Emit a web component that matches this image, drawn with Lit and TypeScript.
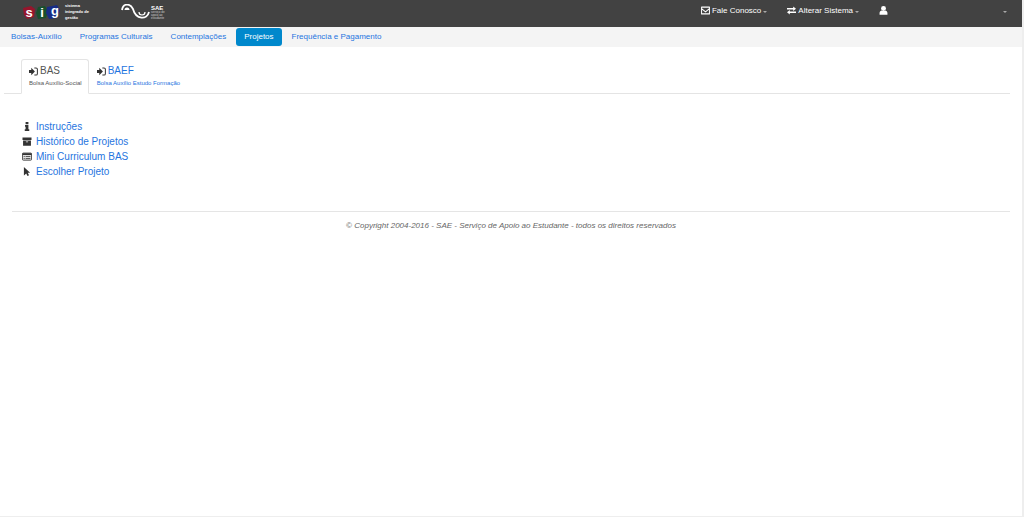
import { LitElement, html, css, svg } from "lit";
import { customElement, property, state } from "lit/decorators.js";
import { classMap } from "lit/directives/class-map.js";

const icons: Record<string, { box: string; shape: unknown }> = {
  mail: {
    box: "0 0 16 16",
    shape: svg`<path d="M1 2h14v12H1z M1 4.500l7 6L15 4.500" fill="none" stroke="currentColor" stroke-width="1.8" stroke-linejoin="round"/>`,
  },
  exchange: {
    box: "0 0 16 16",
    shape: svg`<path d="M0 3.500h11V.8L16 4.800l-5 4V6.400H0z M16 9.600H5V7.200L0 11.200l5 4v-2.700h11z"/>`,
  },
  user: {
    box: "0 0 16 16",
    shape: svg`<circle cx="8" cy="4.600" r="4.400"/><path d="M1 15.500v-3C1 9.600 3 8 5 7.800c2 1.500 4 1.500 6 0 2 .2 4 1.800 4 4.700v3z"/>`,
  },
  enter: {
    box: "0 0 16 16",
    shape: svg`<path d="M0 5.500h4V1.500L10.500 8 4 14.500v-4H0z"/><path d="M9.500 1.800h3a2.400 2.400 0 0 1 2.400 2.400v7.600a2.400 2.400 0 0 1-2.400 2.400h-3" fill="none" stroke="currentColor" stroke-width="1.800"/>`,
  },
  info: {
    box: "0 0 16 16",
    shape: svg`<path d="M5.500 0h5v4h-5z M4.500 5.500h6V13H12v3H4v-3h1.500V8.500h-1z"/>`,
  },
  archive: {
    box: "0 0 16 16",
    shape: svg`<path fill-rule="evenodd" d="M0 1h16v4.500H0z M1 6.200h14V15.500H1z M6 7.800v1.500h4V7.800z"/>`,
  },
  card: {
    box: "0 0 18 16",
    shape: svg`<rect x=".8" y="1.800" width="16.400" height="12.800" rx="1.500" fill="#ddd" stroke="currentColor" stroke-width="1.500"/><path d="M1 2h16V5.500H1z M3 7.200h2v1.400H3z M6.500 7.200h8.500v1.400H6.500z M3 10.500h2v1.400H3z M6.500 10.500h8.500v1.400H6.500z"/>`,
  },
  pointer: {
    box: "0 0 16 16",
    shape: svg`<path d="M2.500 0l11 10.300H9.300l2.300 4.500-2.700 1.200L6.600 11.500 2.500 15z"/>`,
  },
};

@customElement("ui-icon")
class UiIcon extends LitElement {
  @property() name = "info";

  static styles = css`
    :host {
      display: inline-flex;
      flex: none;
    }
    .glyph {
      width: 100%;
      height: 100%;
      fill: currentColor;
    }
  `;

  render() {
    const icon = icons[this.name];
    return html`<svg class="glyph" viewBox=${icon.box} aria-hidden="true">${icon.shape}</svg>`;
  }
}

@customElement("top-bar")
class TopBar extends LitElement {
  static styles = css`
    :host {
      display: block;
      background: #424242;
      color: #fff;
    }
    .bar {
      display: flex;
      align-items: flex-start;
      height: 27px;
      padding: 0 15px 0 23px;
    }
    .brand {
      display: flex;
      align-items: center;
      gap: 5px;
      height: 24px;
      color: #fff;
      text-decoration: none;
    }
    .brand + .brand {
      margin-left: 26px;
      gap: 1px;
    }
    .sig {
      width: 37px;
      height: 16px;
    }
    .wave {
      width: 29px;
      height: 16px;
    }
    .caption {
      font-size: 4px;
      line-height: 6px;
      font-weight: bold;
      width: 30px;
      white-space: nowrap;
    }
    .unit {
      display: flex;
      flex-direction: column;
      width: 16px;
      font-size: 3px;
      line-height: 3px;
      white-space: nowrap;
      color: #ccc;
    }
    .unit strong {
      font-size: 6px;
      line-height: 6px;
      color: #fff;
    }
    .menus {
      display: flex;
      margin-left: auto;
      gap: 20px;
    }
    .menu {
      display: flex;
      align-items: center;
      gap: 2px;
      height: 21px;
      padding: 0;
      border: 0;
      background: none;
      color: inherit;
      font: inherit;
      white-space: nowrap;
      cursor: pointer;
    }
    .account {
      width: 128px;
    }
    .menu ui-icon {
      width: 9px;
      height: 9px;
    }
    .caret {
      margin-top: 2px;
      border: 2px solid transparent;
      border-top-color: #aaa;
      border-bottom: 0;
    }
    .account .caret {
      margin-left: auto;
    }
  `;

  render() {
    return html`
      <header class="bar">
        <a class="brand" href="#">
          <svg class="sig" viewBox="0 0 37 16" role="img" aria-label="sig">
            <path d="M0 4l8-2 4 3-1 8-7 2-3-4z" fill="#96152c" />
            <path d="M15 3l7-1 3 5-2 7-8 1-2-6z" fill="#17502c" />
            <path d="M24 3l10-2 3 5-3 8-8 1-3-6z" fill="#182c85" />
            <g fill="#fff" font-family="Liberation Sans, sans-serif" font-size="13" font-weight="bold" text-anchor="middle">
              <text x="6" y="13">s</text>
              <text x="19" y="13">i</text>
              <text x="32" y="11">g</text>
            </g>
          </svg>
          <span class="caption">sistema<br />integrado de<br />gestão</span>
        </a>
        <a class="brand" href="#">
          <svg class="wave" viewBox="0 0 29 16" role="img" aria-label="SAE">
            <path d="M1 6C2-1 9-1 12 5c3 11 14 11 16 3" fill="none" stroke="#fff" stroke-width="1.800" />
            <path d="M3.500 6a2.500 2.500 0 0 1 5 0z" fill="#fff" />
            <path d="M18 8a3 3 0 0 0 6 0" fill="none" stroke="#fff" stroke-width="1.200" />
          </svg>
          <span class="unit"><strong>SAE</strong><span>serviço de</span><span>apoio ao</span><span>estudante</span></span>
        </a>
        <nav class="menus">
          <button class="menu"><ui-icon name="mail"></ui-icon>Fale Conosco<span class="caret"></span></button>
          <button class="menu"><ui-icon name="exchange"></ui-icon>Alterar Sistema<span class="caret"></span></button>
          <button class="menu account" aria-label="Conta"><ui-icon name="user"></ui-icon><span class="caret"></span></button>
        </nav>
      </header>
    `;
  }
}

@customElement("app-root")
class AppRoot extends LitElement {
  @state() private section = "Projetos";
  @state() private tab = "BAS";

  private sections = ["Bolsas-Auxílio", "Programas Culturais", "Contemplações", "Projetos", "Frequência e Pagamento"];
  private tabs = [
    { id: "BAS", detail: "Bolsa Auxílio-Social" },
    { id: "BAEF", detail: "Bolsa Auxílio Estudo Formação" },
  ];
  private actions = [
    { icon: "info", label: "Instruções" },
    { icon: "archive", label: "Histórico de Projetos" },
    { icon: "card", label: "Mini Curriculum BAS" },
    { icon: "pointer", label: "Escolher Projeto" },
  ];

  static styles = css`
    :host {
      display: block;
      box-sizing: border-box;
      min-height: 100vh;
      border-right: 2px solid #eee;
      border-bottom: 1px solid #eee;
      background: #fff;
      color: #333;
      font: 8px/12px "Liberation Sans", Arial, sans-serif;
    }
    a {
      color: #1f75e0;
      text-decoration: none;
    }
    .sections {
      display: flex;
      gap: 2px;
      height: 20px;
      padding-left: 3px;
      background: #f4f4f4;
    }
    .section {
      height: 18px;
      margin-top: 1px;
      padding: 0 8px;
      border-radius: 3px;
      line-height: 18px;
    }
    .section.active {
      background: #08c;
      color: #fff;
    }
    .tabs {
      display: flex;
      margin: 12px 12px 0 4px;
      padding-left: 17px;
      border-bottom: 1px solid #e4e4e4;
    }
    .tab {
      display: flex;
      flex-direction: column;
      margin-bottom: -1px;
      padding: 4px 6px 5px 7px;
      border: 1px solid transparent;
      border-radius: 3px 3px 0 0;
      background: none;
      color: #1f75e0;
      font: inherit;
      text-align: left;
      cursor: pointer;
    }
    .tab.active {
      border-color: #e4e4e4;
      border-bottom-color: #fff;
      background: #fff;
      color: #555;
    }
    .title {
      display: flex;
      align-items: center;
      gap: 2px;
      font-size: 10px;
      line-height: 14px;
    }
    .title ui-icon {
      width: 9px;
      height: 9px;
      color: #333;
    }
    .detail {
      font-size: 6px;
      line-height: 10px;
    }
    .actions {
      display: flex;
      flex-direction: column;
      margin: 25px 12px 0 22px;
      padding: 0;
      list-style: none;
      font-size: 10px;
      line-height: 15px;
    }
    .action {
      display: flex;
      align-items: center;
      gap: 4px;
    }
    .action ui-icon {
      width: 10px;
      height: 9px;
    }
    .footer {
      margin: 32px 12px 0;
      padding-top: 8px;
      border-top: 1px solid #e5e5e5;
      color: #666;
      font-style: italic;
      text-align: center;
    }
  `;

  render() {
    return html`
      <top-bar></top-bar>
      <nav class="sections">
        ${this.sections.map(
          (name) => html`<a
            href="#"
            class=${classMap({ section: true, active: name === this.section })}
            @click=${() => (this.section = name)}
            >${name}</a
          >`
        )}
      </nav>
      <main>
        <div class="tabs" role="tablist">
          ${this.tabs.map(
            ({ id, detail }) => html`<button
              role="tab"
              aria-selected=${id === this.tab}
              class=${classMap({ tab: true, active: id === this.tab })}
              @click=${() => (this.tab = id)}
            >
              <span class="title"><ui-icon name="enter"></ui-icon>${id}</span>
              <span class="detail">${detail}</span>
            </button>`
          )}
        </div>
        <ul class="actions">
          ${this.actions.map(
            ({ icon, label }) => html`<li class="action"><ui-icon name=${icon}></ui-icon><a href="#">${label}</a></li>`
          )}
        </ul>
      </main>
      <footer class="footer">© Copyright 2004-2016 - SAE - Serviço de Apoio ao Estudante - todos os direitos reservados</footer>
    `;
  }
}
